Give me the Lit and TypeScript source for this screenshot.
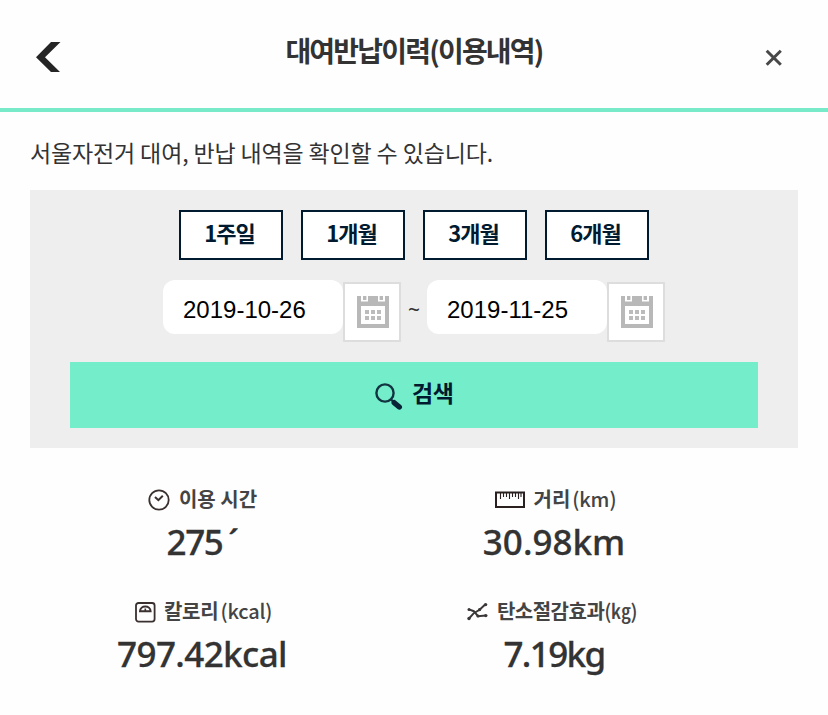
import { LitElement, html, svg, css } from "lit";
import { customElement } from "lit/decorators.js";

const icons: Record<string, unknown> = {
  time: html`<svg width="22" height="22" viewBox="0 0 22 22" fill="none" stroke="#3b3030">
    <circle cx="11" cy="11" r="9.7" stroke-width="1.8" />
    <path d="M7 8 10.4 11.2 14.8 6.8" stroke-width="2" /></svg>`,
  distance: html`<svg width="30" height="18" viewBox="0 0 30 18" fill="none" stroke="#2b2020">
    <rect x="1" y="1.5" width="28" height="14.5" stroke-width="2" />
    <path d="M5.5 2v6M8.5 2v4M11.5 2v4M14.5 2v6M17.5 2v4M20.5 2v4M23.5 2v6M26 2v4" stroke-width="1.1" /></svg>`,
  calorie: html`<svg width="21" height="21" viewBox="0 0 21 21" fill="none" stroke="#3b3030">
    <rect x="1" y="1" width="18.6" height="18.6" rx="2.5" stroke-width="1.8" />
    <path d="M5 9.3C5 2.9 15.6 2.9 15.6 9.3Z" stroke-width="2" />
    <path d="M10.3 9V6.5" stroke-width="1.6" /></svg>`,
  carbon: html`<svg width="22" height="20" viewBox="0 0 22 20" fill="none" stroke="#3b3737">
    <path d="M2 16.5 6.8 11.2 12.6 7.8 18.2 2.6" stroke-width="2" />
    <path d="M2 7.4 6.8 9.2 11 14.2 18.8 13.6" stroke-width="2" />
    <g fill="#3b3737" stroke="none"><circle cx="2" cy="16.5" r="1.7" /><circle cx="2" cy="7.4" r="1.5" /><circle cx="18.6" cy="2.6" r="1.7" /><circle cx="18.8" cy="13.6" r="1.7" /><circle cx="12.6" cy="7.6" r="1.6" /><circle cx="11" cy="14" r="1.6" /></g></svg>`,
};

const calendar = html`<svg width="32" height="34" viewBox="0 0 32 34">
  <path fill="#b8b8b8" fill-rule="evenodd" d="M0 1H4V6.5H11V1H21V6.5H28V1H32V33H0ZM4 11V29H28V11Z" />
  <path fill="#b8b8b8" d="M6 1h3.4v4H6zM22.6 1H26v4h-3.4z" />
  <g fill="#bcbcbc">${[8, 14, 20].map((x) => [15, 21].map((y) => svg`<rect x=${x} y=${y} width="4" height="4" />`))}</g>
</svg>`;

@customElement("app-root")
export class AppRoot extends LitElement {
  static styles = css`
    :host {
      display: block;
      height: 715px;
      overflow: hidden;
      background: #fefefe;
      color: #333;
      font-family: "Noto Sans CJK KR", sans-serif;
    }
    * { box-sizing: border-box; }
    svg { display: block; flex: none; }
    button { font: inherit; border: 0; background: none; padding: 0; margin: 0; color: inherit; }
    header {
      height: 112px;
      border-bottom: 4px solid #78e9c9;
      display: grid;
      grid-template-columns: 100px 1fr 100px;
    }
    .back { padding: 42px 0 0 36px; display: block; text-align: left; align-self: start; }
    .close { padding: 49px 0 0 37px; display: block; align-self: start; }
    h1 {
      margin: 29px 0 0;
      font-size: 28px;
      line-height: 42px;
      font-weight: 700;
      letter-spacing: -1.8px;
      text-align: center;
      white-space: nowrap;
    }
    .intro { margin: 23px 30px 0; height: 55px; font-size: 23px; line-height: 34px; letter-spacing: -0.14px; white-space: nowrap; }
    .panel {
      margin: 0 30px;
      height: 258px;
      padding: 20px 40px;
      background: #eee;
    }
    .periods { display: flex; justify-content: center; gap: 18px; }
    .period {
      width: 104px;
      height: 50px;
      border: 2px solid #001a30;
      background: #fff;
      color: #001a30;
      font-size: 22px;
      line-height: 40px;
      padding: 0 3px 6px 0;
      font-weight: 700;
      letter-spacing: -1px;
    }
    .dates { display: flex; justify-content: center; margin-top: 20px; height: 62px; }
    .date {
      width: 180px;
      height: 54px;
      border-radius: 12px;
      background: #fff;
      color: #000;
      padding-left: 20px;
      font: 24px/60px "Liberation Sans", sans-serif;
    }
    .calendar {
      width: 58px;
      height: 60px;
      margin-top: 2px;
      border: 2px solid #ddd;
      background: #fff;
      padding: 0 0 0 12px;
    }
    .tilde { width: 26px; text-align: center; font: 21px/58px "Noto Sans", sans-serif; }
    .search {
      width: 100%;
      height: 66px;
      margin-top: 20px;
      background: #74edcb;
      color: #001a30;
      display: flex;
      gap: 9px;
      padding: 0 0 0 305px;
      font-size: 23px;
      font-weight: 700;
      line-height: 60px;
      letter-spacing: -0.5px;
    }
    .search svg { margin-top: 21px; }
    .stats {
      margin: 36px 0 0 26px;
      display: grid;
      grid-template-columns: 352px 352px;
      grid-auto-rows: 112px;
      text-align: center;
    }
    .label { display: flex; justify-content: center; align-items: center; height: 30px; font-size: 20px; line-height: 30px; font-weight: 700; white-space: nowrap; color: #444; }
    .label svg { margin-top: 2px; }
    .value { font: 500 35px/50px "Noto Sans", "Noto Sans CJK KR", sans-serif; -webkit-text-stroke: 0.3px #333; margin-top: 3px; white-space: nowrap; }
    .time .label { padding-left: 3px; }
    .time .name { margin-left: 9px; letter-spacing: 0; }
    .distance .label { padding-left: 3px; }
    .distance .name { margin-left: 9px; letter-spacing: -0.1px; }
    .calorie .label { padding-left: 3px; }
    .calorie .name { margin-left: 8px; letter-spacing: -0.2px; }
    .carbon .label { padding-right: 4px; }
    .carbon .name { margin-left: 8px; letter-spacing: -0.5px; }
    .time .value { letter-spacing: -1.5px; }
    .prime { margin-left: 6px; }
    .calorie .value { letter-spacing: -0.6px; }
    .carbon .value { letter-spacing: -1.6px; }
    .unit { font-weight: 500; margin-left: 2px; }
    .carbon .unit { margin-left: 0; }
  `;

  private dateField(value: string) {
    return html`<div class="date">${value}</div><button class="calendar" aria-label="달력">${calendar}</button>`;
  }

  private stat(kind: string, name: string, unit: string, value: unknown) {
    return html`<div class="stat ${kind}">
      <div class="label">${icons[kind]}<span class="name">${name}<span class="unit">${unit}</span></span></div>
      <div class="value">${value}</div>
    </div>`;
  }

  render() {
    return html`
      <header>
        <button class="back" aria-label="뒤로"><svg width="25" height="30" viewBox="0 0 25 30"><path d="M15 0H24.5L9 15.2 24 30H15L0 15.2Z" fill="#252525" /></svg></button>
        <h1>대여반납이력(이용내역)</h1>
        <button class="close" aria-label="닫기"><svg width="18" height="18" viewBox="0 0 18 18"><path d="M1.7 1.7 15.8 15.8M15.8 1.7 1.7 15.8" stroke="#484848" stroke-width="3" /></svg></button>
      </header>
      <p class="intro">서울자전거 대여, 반납 내역을 확인할 수 있습니다.</p>
      <section class="panel">
        <div class="periods">
          ${["1주일", "1개월", "3개월", "6개월"].map((p) => html`<button class="period">${p}</button>`)}
        </div>
        <div class="dates">
          ${this.dateField("2019-10-26")}
          <span class="tilde">~</span>
          ${this.dateField("2019-11-25")}
        </div>
        <button class="search">
          <svg width="28" height="28" viewBox="0 0 28 28"><circle cx="10" cy="10" r="8.6" fill="none" stroke="#123440" stroke-width="2.4" /><path d="M15.5 16 19 19.3" stroke="#123440" stroke-width="2.4" /><path d="M19.2 19.7 24.3 24" stroke="#082436" stroke-width="5.4" stroke-linecap="round" /></svg>
          <span>검색</span>
        </button>
      </section>
      <section class="stats">
        ${this.stat("time", "이용 시간", "", html`275<span class="prime">´</span>`)}
        ${this.stat("distance", "거리", "(km)", "30.98km")}
        ${this.stat("calorie", "칼로리", "(kcal)", "797.42kcal")}
        ${this.stat("carbon", "탄소절감효과", "(㎏)", "7.19kg")}
      </section>
    `;
  }
}
